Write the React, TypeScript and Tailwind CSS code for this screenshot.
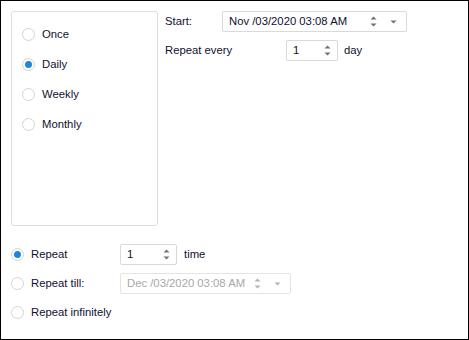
import type { ReactNode } from "react";

const font = { fontFamily: '"Liberation Sans", Arial, sans-serif' };

function Radio({ checked, label }: { checked?: boolean; label: ReactNode }) {
  return (
    <div className="flex items-center h-[30px] gap-[7px]">
      <span className="w-[13px] h-[13px] rounded-full border border-[#d4d4d4] bg-white flex items-center justify-center shrink-0">
        {checked && <span className="w-[7px] h-[7px] rounded-full bg-[#1e88d6]" />}
      </span>
      <span className="text-[11.3px] text-[#101030]">{label}</span>
    </div>
  );
}

function Spin({ disabled }: { disabled?: boolean }) {
  const c = disabled ? "#b4b4b4" : "#707070";
  return (
    <svg width="7" height="11" viewBox="0 0 7 11" className="shrink-0">
      <path d="M0.5 3.5 L3.5 0.5 L6.5 3.5 Z" fill={c} />
      <path d="M0.5 7.5 L3.5 10.5 L6.5 7.5 Z" fill={c} />
    </svg>
  );
}

function Caret({ disabled }: { disabled?: boolean }) {
  return (
    <svg width="7" height="4" viewBox="0 0 7 4" className="shrink-0">
      <path d="M0.5 0.5 L6.5 0.5 L3.5 3.5 Z" fill={disabled ? "#b4b4b4" : "#707070"} />
    </svg>
  );
}

function NumberBox({ value, w }: { value: string; w: string }) {
  return (
    <div className={`${w} h-[21px] border border-[#d9d9d9] rounded-[2px] bg-white flex items-center pl-[6px] pr-[6px]`}>
      <span className="flex-1 text-[11.3px] text-[#101030]">{value}</span>
      <Spin />
    </div>
  );
}

function DateBox({ value, w, disabled }: { value: string; w: string; disabled?: boolean }) {
  return (
    <div className={`${w} h-[21px] border ${disabled ? "border-[#e4e4e4]" : "border-[#d9d9d9]"} rounded-[2px] bg-white flex items-center pl-[6px] pr-[9px]`}>
      <span className={`flex-1 text-[11.3px] ${disabled ? "text-[#a8a8a8]" : "text-[#101030]"}`}>{value}</span>
      <Spin disabled={disabled} />
      <span className="w-[13px]" />
      <Caret disabled={disabled} />
    </div>
  );
}

export default function App() {
  return (
    <div style={font} className="w-[469px] h-[340px] border border-black bg-white flex flex-col">
      <div className="flex pl-[10px] pt-[10px] gap-[7px]">
        <div className="w-[147px] h-[215px] border border-[#dedede] rounded-[3px] pt-[7px] pl-[10px]">
          <Radio label="Once" />
          <Radio checked label="Daily" />
          <Radio label="Weekly" />
          <Radio label="Monthly" />
        </div>
        <div className="flex flex-col gap-[8px]">
          <div className="flex items-center h-[21px]">
            <span className="w-[57px] text-[11.3px] text-[#101030]">Start:</span>
            <DateBox value="Nov /03/2020 03:08 AM" w="w-[185px]" />
          </div>
          <div className="flex items-center h-[21px]">
            <span className="w-[121px] text-[11.3px] text-[#101030]">Repeat every</span>
            <NumberBox value="1" w="w-[52px]" />
            <span className="ml-[6px] text-[11.3px] text-[#101030]">day</span>
          </div>
        </div>
      </div>
      <div className="flex flex-col pl-[10px] mt-[18px] gap-[8px]">
        <div className="flex items-center h-[21px]">
          <div className="w-[109px]"><Radio checked label="Repeat" /></div>
          <NumberBox value="1" w="w-[57px]" />
          <span className="ml-[7px] text-[11.3px] text-[#101030]">time</span>
        </div>
        <div className="flex items-center h-[21px]">
          <div className="w-[109px]"><Radio label="Repeat till:" /></div>
          <DateBox disabled value="Dec /03/2020 03:08 AM" w="w-[171px]" />
        </div>
        <div className="flex items-center h-[21px]">
          <Radio label="Repeat infinitely" />
        </div>
      </div>
    </div>
  );
}
